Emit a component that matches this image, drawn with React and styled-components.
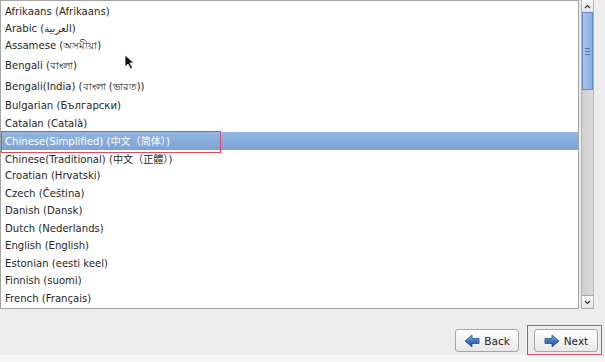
import React from 'react';
import styled, { createGlobalStyle } from 'styled-components';

const GlobalStyle = createGlobalStyle`
  html, body {
    margin: 0;
    padding: 0;
    background: #ededed;
  }
  body {
    font-family: "DejaVu Sans", "Noto Sans", "Noto Sans CJK SC", sans-serif;
  }
`;

const languages = [
    { label: 'Afrikaans (Afrikaans)', h: 18 },
    { label: 'Arabic (العربية)', h: 17 },
    { label: 'Assamese (অসমীয়া)', h: 19 },
    { label: 'Bengali (বাংলা)', h: 21 },
    { label: 'Bengali(India) (বাংলা (ভারত))', h: 20 },
    { label: 'Bulgarian (Български)' },
    { label: 'Catalan (Català)' },
    { label: 'Chinese(Simplified) (中文（简体）)', selected: true },
    { label: 'Chinese(Traditional) (中文（正體）)' },
    { label: 'Croatian (Hrvatski)' },
    { label: 'Czech (Čeština)' },
    { label: 'Danish (Dansk)' },
    { label: 'Dutch (Nederlands)' },
    { label: 'English (English)' },
    { label: 'Estonian (eesti keel)' },
    { label: 'Finnish (suomi)' },
    { label: 'French (Français)' },
];

function ArrowIcon(props) {
    // block arrow, drawn pointing right and mirrored for Back
    const id = "ag" + (props.left ? "l" : "r");
    return (
        <svg width="16" height="14" viewBox="0 0 16 14"
            style={props.left ? { transform: 'scaleX(-1)' } : null}>
            <defs>
                <linearGradient id={id} x1="0" y1="0" x2="0" y2="1">
                    <stop offset="0" stopColor="#86b6ea" />
                    <stop offset="0.5" stopColor="#3a78c4" />
                    <stop offset="1" stopColor="#1d4f94" />
                </linearGradient>
            </defs>
            <path d="M1 4.5 H8 V1 L15 7 L8 13 V9.5 H1 Z"
                fill={"url(#" + id + ")"}
                stroke="#1f4c8a" strokeWidth="0.8" strokeLinejoin="round" />
        </svg>
    );
}

function App() {
    return (
        <Page>
            <GlobalStyle />
            <TopArea>
                <ListBox>
                    {languages.map((l) => (
                        <Row key={l.label} $h={l.h || 17.5} $selected={l.selected}>
                            {l.label}
                            {l.selected ? <RedMark /> : null}
                        </Row>
                    ))}
                    <Cursor width="12" height="16" viewBox="0 0 12 16">
                        <path d="M1 1 L1 13 L4 10 L6.5 15 L8.5 14 L6 9 L10 9 Z"
                            fill="#111" stroke="#fff" strokeWidth="0.8" />
                    </Cursor>
                </ListBox>
                <Scrollbar>
                    <StepButton>
                        <svg width="7" height="5" viewBox="0 0 7 5">
                            <path d="M1 4 L3.5 1.5 L6 4" fill="none" stroke="#333" strokeWidth="1.2" />
                        </svg>
                    </StepButton>
                    <Thumb>
                        <Grip />
                        <Grip />
                        <Grip />
                    </Thumb>
                    <Trough />
                    <StepButton $bottom>
                        <svg width="7" height="5" viewBox="0 0 7 5">
                            <path d="M1 1 L3.5 3.5 L6 1" fill="none" stroke="#333" strokeWidth="1.2" />
                        </svg>
                    </StepButton>
                </Scrollbar>
            </TopArea>
            <ButtonBar>
                <Button $mb={3}>
                    <ArrowIcon left />
                    Back
                </Button>
                <RedFrame>
                    <Button>
                        <ArrowIcon />
                        Next
                    </Button>
                </RedFrame>
            </ButtonBar>
            <BottomStrip />
        </Page>
    );
}

export default App;


const Page = styled.div`
width: 605px;
height: 362px;
display: flex;
flex-direction: column;
background: #ededed;
overflow: hidden;
`

const TopArea = styled.div`
display: flex;
height: 309px;
`

const ListBox = styled.div`
position: relative;
box-sizing: border-box;
width: 579px;
height: 309px;
border: 1px solid #a3a3a3;
padding-top: 1px;
background: #fff;
overflow: hidden;
`

const Row = styled.div`
position: relative;
height: ${p => p.$h}px;
display: flex;
align-items: center;
padding-left: 4px;
font-size: 10.1px;
white-space: nowrap;
color: ${p => p.$selected ? '#fff' : '#262626'};
background: ${p => p.$selected ? 'linear-gradient(#93b6e2, #7ca2d6)' : 'transparent'};
`

const RedMark = styled.span`
position: absolute;
left: 0;
top: -1px;
width: 218px;
height: 20px;
border: 1px solid #dd4a63;
`

const Cursor = styled.svg`
position: absolute;
left: 123px;
top: 53px;
`

const Scrollbar = styled.div`
display: flex;
flex-direction: column;
box-sizing: border-box;
width: 13px;
height: 309px;
margin-left: 2px;
border-left: 1px solid #b4b4b4;
border-right: 1px solid #b4b4b4;
background: #d6d6d6;
`

const StepButton = styled.div`
height: 12px;
display: flex;
align-items: center;
justify-content: center;
background: linear-gradient(#fbfbfb, #e4e4e4);
border-top: ${p => p.$bottom ? '1px solid #a8a8a8' : 'none'};
border-bottom: ${p => p.$bottom ? '1px solid #a8a8a8' : 'none'};
`

const Thumb = styled.div`
height: 78px;
display: flex;
flex-direction: column;
align-items: center;
justify-content: center;
gap: 2px;
box-sizing: border-box;
border: 1px solid #5f8ac6;
background: linear-gradient(90deg, #a9c6ec, #8db0df);
`

const Grip = styled.div`
width: 5px;
height: 1px;
background: #4d78b6;
`

const Trough = styled.div`
flex: 1;
background: linear-gradient(90deg, #cfcfcf, #dadada);
`

const ButtonBar = styled.div`
display: flex;
justify-content: flex-end;
align-items: flex-end;
gap: 8px;
height: 46px;
padding-right: 3px;
`

const RedFrame = styled.div`
box-sizing: border-box;
width: 75px;
height: 30px;
padding: 3px 3px 2px 6px;
border: 1px solid #dd4a63;
`

const Button = styled.div`
box-sizing: border-box;
width: 64px;
height: 23px;
margin-bottom: ${p => p.$mb || 0}px;
display: flex;
align-items: center;
justify-content: center;
gap: 4px;
border: 1px solid #a5a5a5;
border-radius: 3px;
background: linear-gradient(#fefefe, #e8e8e8);
font-size: 10.5px;
color: #222;
`

const BottomStrip = styled.div`
flex: 1;
background: #f7f7f7;
`
